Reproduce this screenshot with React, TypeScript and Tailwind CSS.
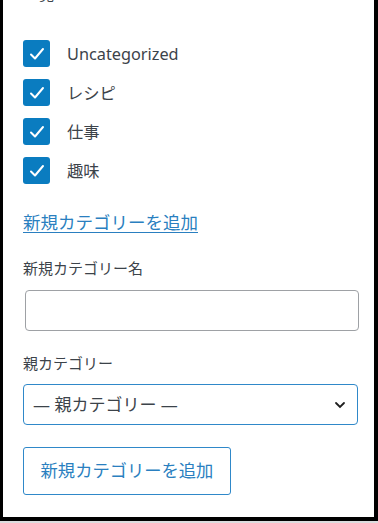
const FONT = "font-['Noto_Sans','Noto_Sans_CJK_JP',sans-serif]";

const CATS = ["Uncategorized", "レシピ", "仕事", "趣味"];

function CheckBox() {
  return (
    <span className="flex h-[27px] w-[27px] shrink-0 items-center justify-center rounded-[3px] bg-[#0a7cc0]">
      <svg width="20" height="20" viewBox="0 0 20 20" fill="none">
        <path
          d="M4 10.5 L8 14.5 L16 5"
          stroke="white"
          strokeWidth="2"
          strokeLinecap="round"
          strokeLinejoin="round"
        />
      </svg>
    </span>
  );
}

export default function App() {
  return (
    <div className={`h-[523px] w-[378px] overflow-hidden bg-[#dcdcde] ${FONT}`}>
      <div className="relative h-[521px] overflow-hidden border-b-[4px] border-l-[3px] border-r-[4px] border-black bg-white pl-[20px] text-[#3c434a]">
        {/* heading scrolled off the top */}
        <div className="absolute left-[21px] top-[-14px] text-[15px] leading-[17px] text-[#3c434a]">
          一覧
        </div>

        <ul className="flex flex-col gap-[12px] pt-[40px]">
          {CATS.map((c) => (
            <li key={c} className="flex h-[27px] items-center">
              <CheckBox />
              <span className="ml-[17px] text-[16.3px] leading-[24px]">{c}</span>
            </li>
          ))}
        </ul>

        <a className="mt-[26px] block w-fit text-[17.5px] leading-[24px] text-[#2a7fc0] underline underline-offset-[3px]">
          新規カテゴリーを追加
        </a>

        <label className="mt-[23px] block text-[15px] leading-[22px]">新規カテゴリー名</label>
        <div className="ml-[2px] mt-[11px] h-[41px] w-[334px] rounded-[4px] border border-[#9ea1a5] bg-white" />

        <label className="mt-[21px] block text-[15px] leading-[22px]">親カテゴリー</label>
        <div className="mt-[10px] flex h-[41px] w-[335px] items-center justify-between rounded-[4px] border-[1.5px] border-[#2f88c9] bg-white pl-[9px] pr-[11px]">
          <span className="text-[17px] leading-[24px]">— 親カテゴリー —</span>
          <svg width="12" height="8" viewBox="0 0 12 8" fill="none">
            <path d="M2 2 L6 6 L10 2" stroke="#1e1e1e" strokeWidth="1.8" strokeLinecap="round" />
          </svg>
        </div>

        <button
          type="button"
          className="mt-[22px] flex h-[48px] w-[208px] items-center justify-center rounded-[3px] border border-[#2f88c9] bg-white text-[17.3px] leading-[24px] text-[#2a7fc0]"
        >
          新規カテゴリーを追加
        </button>
      </div>
    </div>
  );
}
